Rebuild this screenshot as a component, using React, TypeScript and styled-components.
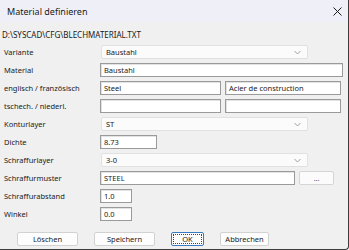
import React from 'react'
import styled, { createGlobalStyle } from 'styled-components'

const GlobalStyle = createGlobalStyle`
html, body {
  margin: 0;
  padding: 0;
  background: #f0f0f0;
}
* {
  box-sizing: border-box;
}
`

type Field =
    | { kind: 'combo'; label: string; value: string }
    | { kind: 'edit'; label: string; value: string; width: number }
    | { kind: 'pair'; label: string; left: string; right: string }
    | { kind: 'browse'; label: string; value: string }

const fields: Field[] = [
    { kind: 'combo', label: 'Variante', value: 'Baustahl' },
    { kind: 'edit', label: 'Material', value: 'Baustahl', width: 243 },
    { kind: 'pair', label: 'englisch / französisch', left: 'Steel', right: 'Acier de construction' },
    { kind: 'pair', label: 'tschech. / niederl.', left: '', right: '' },
    { kind: 'combo', label: 'Konturlayer', value: 'ST' },
    { kind: 'edit', label: 'Dichte', value: '8.73', width: 57 },
    { kind: 'combo', label: 'Schraffurlayer', value: '3-0' },
    { kind: 'browse', label: 'Schraffurmuster', value: 'STEEL' },
    { kind: 'edit', label: 'Schraffurabstand', value: '1.0', width: 32 },
    { kind: 'edit', label: 'Winkel', value: '0.0', width: 32 },
]

function Chevron() {
    return (
        <svg width="7" height="5" viewBox="0 0 7 5">
            <path d="M0.5 1 L3.5 4 L6.5 1" fill="none" stroke="#8a8a8a" strokeWidth="0.8" />
        </svg>
    )
}

function CloseIcon() {
    return (
        <svg width="9" height="9" viewBox="0 0 9 9">
            <path d="M0.5 0.5 L8.5 8.5 M8.5 0.5 L0.5 8.5" stroke="#1a1a1a" strokeWidth="1" />
        </svg>
    )
}

function renderControl(f: Field) {
    switch (f.kind) {
        case 'combo':
            return (
                <Combo>
                    <span>{f.value}</span>
                    <Chevron />
                </Combo>
            )
        case 'edit':
            return <Edit w={f.width}>{f.value}</Edit>
        case 'pair':
            return (
                <PairRow>
                    <Edit w={121}>{f.left}</Edit>
                    <Edit w={116}>{f.right}</Edit>
                </PairRow>
            )
        case 'browse':
            return (
                <PairRow>
                    <Edit w={195}>{f.value}</Edit>
                    <SmallButton>...</SmallButton>
                </PairRow>
            )
    }
}

function App() {
    return (
        <>
            <GlobalStyle />
            <Window>
                <TitleBar>
                    <Title>Material definieren</Title>
                    <CloseBox>
                        <CloseIcon />
                    </CloseBox>
                </TitleBar>
                <Body>
                    <FilePath>D:\SYSCAD\CFG\BLECHMATERIAL.TXT</FilePath>
                    <FormGrid>
                        {fields.map(f => (
                            <React.Fragment key={f.label}>
                                <Label>{f.label}</Label>
                                <Cell>{renderControl(f)}</Cell>
                            </React.Fragment>
                        ))}
                    </FormGrid>
                    <ButtonBar>
                        <DialogButton w={61}>Löschen</DialogButton>
                        <DialogButton w={61}>Speichern</DialogButton>
                        <DialogButton w={33} primary>OK</DialogButton>
                        <DialogButton w={49}>Abbrechen</DialogButton>
                    </ButtonBar>
                </Body>
            </Window>
        </>
    )
}

const Window = styled.div`
width: 349px;
height: 250px;
background: #f0f0f0;
border-right: 1px solid #3c3c3c;
border-bottom: 1px solid #3c3c3c;
border-bottom-right-radius: 4px;
display: flex;
flex-direction: column;
font-family: "Noto Sans", "Open Sans", sans-serif;
color: #1a1a1a;
overflow: hidden;
`

const TitleBar = styled.div`
height: 22px;
background: #eff0f7;
display: flex;
align-items: center;
justify-content: space-between;
padding: 0 6px 0 7px;
`

const Title = styled.div`
font-size: 9px;
color: #1a1a1a;
`

const CloseBox = styled.div`
display: flex;
align-items: center;
`

const Body = styled.div`
flex: 1;
display: flex;
flex-direction: column;
padding: 5px 0 0 2px;
`

const FilePath = styled.div`
font-size: 8px;
height: 16px;
line-height: 16px;
`

const FormGrid = styled.div`
display: grid;
grid-template-columns: 98px 1fr;
grid-auto-rows: 18px;
margin-top: 0;
`

const Label = styled.div`
font-size: 7.5px;
display: flex;
align-items: center;
padding-left: 2px;
`

const Cell = styled.div`
display: flex;
align-items: center;
`

const Combo = styled.div`
width: 207px;
height: 14px;
background: #fbfbfb;
border: 1px solid #e1e1e1;
border-radius: 2px;
display: flex;
align-items: center;
justify-content: space-between;
padding: 0 6px 0 4px;
font-size: 7.5px;
margin-left: 1px;
`

const Edit = styled.div<{ w: number }>`
width: ${p => p.w}px;
height: 14px;
background: #ffffff;
border: 1px solid #9a9a9a;
box-shadow: inset 1px 1px 0 #e3e3e3;
display: flex;
align-items: center;
padding: 0 3px;
font-size: 7.5px;
white-space: nowrap;
overflow: hidden;
`

const PairRow = styled.div`
display: flex;
align-items: center;
gap: 4px;
`

const SmallButton = styled.div`
width: 35px;
height: 14px;
background: #fbfbfb;
border: 1px solid #d5d5d5;
border-radius: 2px;
display: flex;
align-items: center;
justify-content: center;
font-size: 7px;
color: #555;
`

const ButtonBar = styled.div`
display: flex;
align-items: center;
padding: 9px 0 0 15px;
gap: 16px;
`

const DialogButton = styled.div<{ w: number; primary?: boolean }>`
width: ${p => p.w}px;
height: 14px;
background: #fdfdfd;
border: 1px solid ${p => (p.primary ? '#3a7ac4' : '#d2d2d2')};
outline: ${p => (p.primary ? '1px dotted #444' : 'none')};
outline-offset: -3px;
border-radius: 2px;
display: flex;
align-items: center;
justify-content: center;
font-size: 7.5px;
`

export default App
